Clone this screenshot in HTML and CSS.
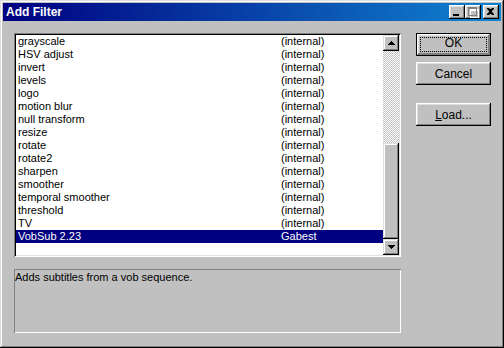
FILE: index.html
```html
<!DOCTYPE html>
<html lang="en">
<head>
  <meta charset="UTF-8">
  <title>Add Filter</title>
  <link rel="stylesheet" href="styles.css">
</head>
<body>
  <div class="window">
    <div class="titlebar">
      <span class="title">Add Filter</span>
      <div class="title-buttons">
        <button class="tbtn"><svg width="16" height="14" viewBox="0 0 16 14"><rect x="4" y="9" width="6" height="2" fill="#000"/></svg></button>
        <button class="tbtn"><svg width="16" height="14" viewBox="0 0 16 14"><path d="M4 3h9v9h-9z M5 5v6h7v-6z" fill="#fff" transform="translate(1 1)" fill-rule="evenodd"/><path d="M3 2h9v9h-9z M4 4v6h7v-6z" fill="#808080" fill-rule="evenodd"/></svg></button>
        <button class="tbtn close"><svg width="16" height="14" viewBox="0 0 16 14"><path d="M4 3h2l1 1h1l1-1h2v1l-2 2v1l2 2v1h-2l-1-1h-1l-1 1h-2v-1l2-2v-1l-2-2z" fill="#000"/></svg></button>
      </div>
    </div>

    <div class="content">
      <div class="left">
        <div class="listbox">
          <div class="rows">
            <div class="row"><span>grayscale</span><span>(internal)</span></div>
            <div class="row"><span>HSV adjust</span><span>(internal)</span></div>
            <div class="row"><span>invert</span><span>(internal)</span></div>
            <div class="row"><span>levels</span><span>(internal)</span></div>
            <div class="row"><span>logo</span><span>(internal)</span></div>
            <div class="row"><span>motion blur</span><span>(internal)</span></div>
            <div class="row"><span>null transform</span><span>(internal)</span></div>
            <div class="row"><span>resize</span><span>(internal)</span></div>
            <div class="row"><span>rotate</span><span>(internal)</span></div>
            <div class="row"><span>rotate2</span><span>(internal)</span></div>
            <div class="row"><span>sharpen</span><span>(internal)</span></div>
            <div class="row"><span>smoother</span><span>(internal)</span></div>
            <div class="row"><span>temporal smoother</span><span>(internal)</span></div>
            <div class="row"><span>threshold</span><span>(internal)</span></div>
            <div class="row"><span>TV</span><span>(internal)</span></div>
            <div class="row selected"><span>VobSub 2.23</span><span>Gabest</span></div>
          </div>
          <div class="scrollbar">
            <div class="sbtn"><svg width="7" height="4" viewBox="0 0 7 4"><path d="M3 0h1v1h1v1h1v1h1v1h-7v-1h1v-1h1v-1h1z" fill="#000"/></svg></div>
            <div class="track">
              <div class="thumb"></div>
            </div>
            <div class="sbtn"><svg width="7" height="4" viewBox="0 0 7 4"><path d="M0 0h7v1h-1v1h-1v1h-1v1h-1v-1h-1v-1h-1v-1h-1z" fill="#000"/></svg></div>
          </div>
        </div>

        <div class="description">Adds subtitles from a vob sequence.</div>
      </div>

      <div class="right">
        <button class="btn default"><span class="focus">OK</span></button>
        <button class="btn">Cancel</button>
        <button class="btn load"><span><u>L</u>oad...</span></button>
      </div>
    </div>
  </div>
</body>
</html>
```

FILE: styles.css
```css
/* Classic dialog */
body {
  margin: 0;
  font-family: 'Liberation Sans', Arial, sans-serif;
  font-size: 11px;
  background: #c0c0c0;
}

.window {
  width: 504px;
  height: 348px;
  box-sizing: border-box;
  padding: 3px;
  background: #c0c0c0;
  box-shadow: inset -1px -1px #000, inset 1px 1px #dfdfdf, inset -2px -2px #808080, inset 2px 2px #fff;
}

.titlebar {
  height: 18px;
  display: flex;
  align-items: center;
  justify-content: space-between;
  padding: 0 2px 0 3px;
  background: linear-gradient(90deg, #000080, #1084d0);
}

.title {
  color: #fff;
  font-weight: bold;
  font-size: 12px;
}

.title-buttons {
  display: flex;
}

.tbtn {
  width: 16px;
  height: 14px;
  padding: 0;
  border: none;
  background: #c0c0c0;
  box-shadow: inset -1px -1px #000, inset 1px 1px #fff, inset -2px -2px #808080, inset 2px 2px #dfdfdf;
  display: block;
}

.tbtn svg {
  display: block;
}

.close {
  margin-left: 2px;
}

.content {
  display: flex;
  padding: 12px 0 0 11px;
}

.left {
  width: 387px;
}

/* List */
.listbox {
  height: 224px;
  box-sizing: border-box;
  padding: 2px;
  background: #fff;
  display: flex;
  box-shadow: inset 1px 1px #808080, inset -1px -1px #fff, inset 2px 2px #000, inset -2px -2px #dfdfdf;
}

.rows {
  flex: 1;
}

.row {
  display: grid;
  grid-template-columns: 263px 1fr;
  height: 13px;
  line-height: 13px;
  padding-left: 2px;
  color: #000;
  white-space: nowrap;
}

.row.selected {
  background: #000080;
  color: #fff;
}

.scrollbar {
  width: 16px;
  display: flex;
  flex-direction: column;
}

.sbtn {
  height: 16px;
  display: flex;
  align-items: center;
  justify-content: center;
  background: #c0c0c0;
  box-shadow: inset -1px -1px #000, inset 1px 1px #dfdfdf, inset -2px -2px #808080, inset 2px 2px #fff;
}

.track {
  flex: 1;
  display: flex;
  flex-direction: column;
  justify-content: flex-end;
  background: repeating-conic-gradient(#c0c0c0 0 25%, #fff 0 50%) 0 0 / 2px 2px;
}

.thumb {
  height: 96px;
  background: #c0c0c0;
  box-shadow: inset -1px -1px #000, inset 1px 1px #dfdfdf, inset -2px -2px #808080, inset 2px 2px #fff;
}

.description {
  margin-top: 12px;
  height: 64px;
  box-sizing: border-box;
  padding: 2px 0 0 1px;
  line-height: 13px;
  box-shadow: inset 1px 1px #808080, inset -1px -1px #fff;
}

/* Buttons */
.right {
  display: flex;
  flex-direction: column;
  margin-left: 15px;
}

.btn {
  width: 75px;
  height: 23px;
  margin-bottom: 6px;
  padding: 0;
  border: none;
  font-family: inherit;
  font-size: 12px;
  color: #000;
  background: #c0c0c0;
  box-shadow: inset -1px -1px #000, inset 1px 1px #fff, inset -2px -2px #808080, inset 2px 2px #dfdfdf;
}

.btn.default {
  box-shadow: inset 0 0 0 1px #000, inset -2px -2px #808080, inset 2px 2px #fff, inset -3px -3px #808080, inset 3px 3px #dfdfdf;
  padding: 4px;
}

.focus {
  display: block;
  height: 100%;
  box-sizing: border-box;
  line-height: 13px;
  outline: 1px dotted #000;
  outline-offset: -1px;
}

.load {
  margin-top: 12px;
}
```
